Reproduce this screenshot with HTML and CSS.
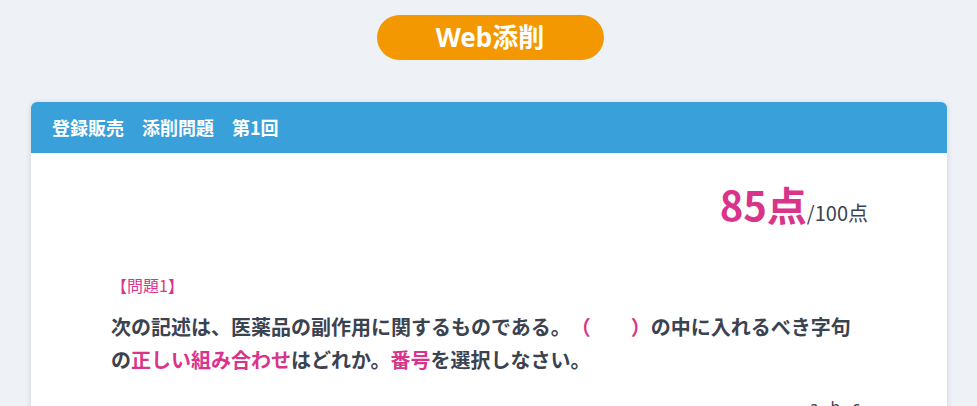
FILE: index.html
```html
<!DOCTYPE html>
<html lang="ja">
<head>
<meta charset="utf-8">
<title>Web添削</title>
<link rel="stylesheet" href="styles.css">
</head>
<body>
<div class="page">
  <div class="title-wrap"><div class="badge">Web添削</div></div>
  <section class="card">
    <header class="card-head">登録販売　添削問題　第1回</header>
    <div class="card-body">
      <div class="score"><span class="score-num">85点</span><span class="score-total">/100点</span></div>
      <div class="q-label">【問題1】</div>
      <p class="q-text">次の記述は、医薬品の副作用に関するものである。<span class="pink">（　　）</span>の中に入れるべき字句の<span class="pink">正しい組み合わせ</span>はどれか。<span class="pink">番号</span>を選択しなさい。</p>
      <div class="cols"><span>a</span><span>b</span><span>c</span></div>
    </div>
  </section>
</div>
</body>
</html>
```
FILE: styles.css
```css
html, body {
  margin: 0;
  padding: 0;
  background: #eef2f6;
  font-family: "Noto Sans", "Noto Sans CJK JP", sans-serif;
  color: #3b4250;
}
.page {
  padding: 15px 30px 0 31px;
}
.title-wrap {
  display: flex;
  justify-content: center;
  padding-left: 2px;
}
.badge {
  width: 227px;
  height: 45px;
  border-radius: 23px;
  background: #f39800;
  color: #fff;
  font-weight: 700;
  font-size: 26px;
  line-height: 45px;
  text-align: center;
}
.card {
  margin-top: 42px;
  background: #fff;
  border-radius: 6px;
  box-shadow: 0 1px 6px rgba(0, 0, 0, 0.13);
  overflow: hidden;
}
.card-head {
  height: 51px;
  background: #3aa0da;
  color: #fff;
  font-family: "Noto Sans CJK JP", sans-serif;
  font-weight: 700;
  font-size: 18px;
  line-height: 51px;
  padding-left: 21px;
}
.card-body {
  padding: 31px 79px 20px 80px;
  text-spacing-trim: space-all;
}
.score {
  text-align: right;
  font-size: 40px;
  line-height: 40px;
  font-family: "Noto Sans CJK JP", sans-serif;
}
.score-num {
  font-size: 40px;
  font-weight: 700;
  color: #d9348a;
}
.score-total {
  font-size: 20px;
  line-height: 1;
  color: #3b4250;
}
.q-label {
  margin-top: 51px;
  font-family: "Noto Sans CJK JP", sans-serif;
  font-size: 16px;
  line-height: 20px;
  color: #d9348a;
  text-spacing-trim: space-all;
}
.q-text {
  margin: 15px 0 0;
  font-family: "Noto Sans CJK JP", sans-serif;
  font-weight: 700;
  font-size: 20px;
  line-height: 33px;
  color: #3b4250;
  text-spacing-trim: space-all;
}
.pink {
  color: #d9348a;
}
.cols {
  display: flex;
  justify-content: flex-end;
  gap: 12px;
  margin-top: 21px;
  padding-right: 8px;
  font-size: 16px;
  line-height: 20px;
  color: #3b4250;
}
```
